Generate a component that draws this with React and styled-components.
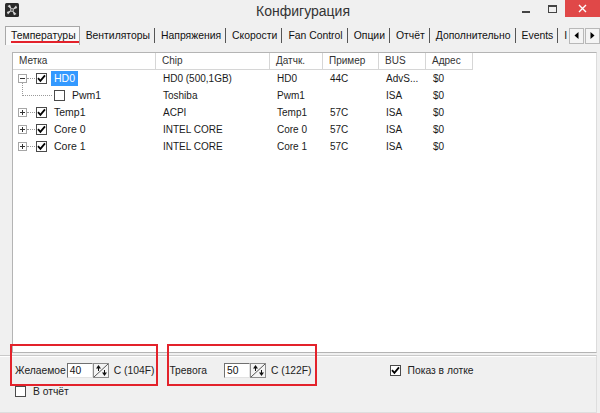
import { Fragment } from 'react';
import styled, { createGlobalStyle } from 'styled-components';

const RED = '#e3222b';

const GlobalStyle = createGlobalStyle`
  html, body {
    margin: 0;
    padding: 0;
    background: #f0f0f0;
  }
  body {
    font-family: "Liberation Sans", Arial, sans-serif;
    font-size: 11px;
    color: #111;
  }
`;

const Window = styled.div`
  width: 600px;
  height: 413px;
  display: flex;
  flex-direction: column;
  background: #f0f0f0;
  overflow: hidden;
`;

const TitleBar = styled.div`
  height: 26px;
  display: grid;
  grid-template-columns: 1fr auto 1fr;
  align-items: start;
`;

const AppIcon = styled.svg`
  width: 14px;
  height: 14px;
  margin: 3px 0 0 5px;
`;

const Title = styled.div`
  font-size: 14px;
  line-height: 22px;
  color: #333;
  padding-left: 6px;
`;

const Controls = styled.div`
  display: flex;
  justify-content: flex-end;
`;

const CtrlButton = styled.div`
  width: ${p => (p.$close ? 35 : 26)}px;
  height: 17px;
  display: flex;
  align-items: center;
  justify-content: center;
  background: ${p => (p.$close ? '#e04848' : 'transparent')};
`;

const MinGlyph = styled.span`
  width: 8px;
  height: 2px;
  margin-top: 6px;
  background: #444;
`;

const MaxGlyph = styled.span`
  width: 7px;
  height: 5px;
  border: 1px solid #444;
  border-top-width: 2px;
`;

const TabStrip = styled.div`
  height: 19px;
  display: flex;
  align-items: stretch;
  padding-left: 5px;
`;

const TabList = styled.div`
  flex: 1;
  display: flex;
  align-items: stretch;
  overflow: hidden;
  white-space: nowrap;
  font-size: 10.4px;
`;

const Tab = styled.div`
  position: relative;
  display: flex;
  align-items: center;
  padding: 0 ${p => (p.$active ? 3 : 4)}px 1px ${p => (p.$active ? 5 : 6)}px;
  color: #111;
  ${p =>
    p.$active
      ? `
    background: #f9f9f9;
    border: 1px solid #a8a8a8;
    border-bottom: none;
    &::after {
      content: '';
      position: absolute;
      left: 5px;
      right: 0;
      bottom: 2px;
      height: 2px;
      background: ${RED};
    }
  `
      : ''}
`;

const TabSep = styled.span`
  align-self: center;
  width: 1px;
  height: 15px;
  background: #555;
  flex-shrink: 0;
`;

const ScrollButtons = styled.div`
  display: flex;
  align-items: center;
  gap: 1px;
  padding-left: 2px;
`;

const ScrollButton = styled.div`
  width: 13px;
  height: 14px;
  border: 1px solid #b8b8b8;
  background: #f4f4f4;
  display: flex;
  align-items: center;
  justify-content: center;
`;

const COLS = '143px 114px 53px 56px 47px 47px 1fr';

const ListView = styled.div`
  margin: 7px 3px 0 12px;
  height: 299px;
  border: 1px solid #b4b4b4;
  border-right-color: #dcdcdc;
  background: #fff;
  font-size: 10px;
`;

const HeaderRow = styled.div`
  display: grid;
  grid-template-columns: ${COLS};
  height: 17px;
`;

const HeaderCell = styled.div`
  padding-left: 6px;
  line-height: 16px;
  color: #333;
  ${p => (p.$blank ? '' : 'border-right: 1px solid #d6d6d6; border-bottom: 1px solid #d6d6d6;')}
`;

const Row = styled.div`
  display: grid;
  grid-template-columns: ${COLS};
  height: 17px;
  align-items: center;
`;

const Cell = styled.div`
  padding-left: 7px;
  white-space: nowrap;
  color: #1a1a1a;
`;

const TreeCell = styled.div`
  display: flex;
  align-items: center;
  height: 17px;
  padding-left: ${p => (p.$level ? 9 : 5)}px;
`;

const Elbow = styled.span`
  align-self: flex-start;
  width: 29px;
  height: 12px;
  margin-top: -4px;
  margin-right: 2px;
  border-left: 1px dotted #9a9a9a;
  border-bottom: 1px dotted #9a9a9a;
  box-sizing: content-box;
`;

const Dash = styled.span`
  width: 8px;
  margin-right: 1px;
  border-top: 1px dotted #9a9a9a;
`;

const Expander = styled.svg`
  width: 9px;
  height: 9px;
  flex-shrink: 0;
`;

const Box = styled.span`
  width: 11px;
  height: 11px;
  box-sizing: border-box;
  border: 1px solid #4a4a4a;
  background: #fff;
  display: inline-flex;
  align-items: center;
  justify-content: center;
  flex-shrink: 0;
`;

const Label = styled.span`
  margin-left: 4px;
  padding: 0 3px;
  line-height: 15px;
  font-size: 10.5px;
  background: ${p => (p.$selected ? '#3399ff' : 'transparent')};
  color: ${p => (p.$selected ? '#fff' : '#1a1a1a')};
`;

const Panel = styled.div`
  margin: 2px 3px 0 0;
  border-top: 1px solid #c9c9c9;
  border-bottom: 1px solid #dedede;
  border-right: 1px solid #dedede;
  box-shadow: inset 0 1px 0 #fff;
  height: 50px;
  padding: 6px 0 0 15px;
  display: flex;
  flex-direction: column;
  gap: 8px;
  font-size: 10.3px;
`;

const PanelRow = styled.div`
  display: flex;
  align-items: center;
  height: 16px;
`;

const Field = styled.div`
  position: relative;
  display: flex;
  align-items: center;
  margin-left: ${p => p.$offset || 0}px;
`;

const Highlight = styled.span`
  position: absolute;
  top: -19px;
  bottom: -8px;
  left: ${p => p.$left}px;
  right: ${p => p.$right}px;
  border: 2px solid ${RED};
  pointer-events: none;
`;

const FieldLabel = styled.span`
  margin-right: ${p => p.$gap}px;
  color: #222;
`;

const NumInput = styled.div`
  width: 22px;
  height: 13px;
  padding-left: 2px;
  line-height: 13px;
  background: #fff;
  border: 1px solid;
  border-color: #707070 #e2e2e2 #e2e2e2 #707070;
`;

const Spinner = styled.svg`
  width: 16px;
  height: 15px;
  flex-shrink: 0;
`;

const Unit = styled.span`
  margin-left: 5px;
  color: #222;
`;

const CheckLine = styled.label`
  display: flex;
  align-items: center;
  gap: 7px;
  margin-left: ${p => p.$offset || 0}px;
  color: #222;
`;

const Check = ({ checked }) => (
  <Box>
    {checked && (
      <svg width="9" height="9" viewBox="0 0 9 9">
        <path d="M1 4.2 L3.4 6.8 L8 1.4" fill="none" stroke="#000" strokeWidth="1.8" />
      </svg>
    )}
  </Box>
);

const Toggle = ({ open }) => (
  <Expander viewBox="0 0 9 9">
    <rect x="0.5" y="0.5" width="8" height="8" fill="#fff" stroke="#a6a6a6" />
    <line x1="2" y1="4.5" x2="7" y2="4.5" stroke="#333" />
    {!open && <line x1="4.5" y1="2" x2="4.5" y2="7" stroke="#333" />}
  </Expander>
);

const SpinBox = () => (
  <Spinner viewBox="0 0 16 15">
    <rect x="0.5" y="0.5" width="15" height="14" fill="#f4f4f4" stroke="#8c8c8c" />
    <line x1="1" y1="14" x2="15" y2="1" stroke="#555" />
    <path d="M3 5.5 L8 5.5 L5.5 2 Z" fill="#111" />
    <line x1="5.5" y1="5" x2="5.5" y2="8" stroke="#111" />
    <path d="M9 9.5 L14 9.5 L11.5 13 Z" fill="#111" />
    <line x1="11.5" y1="7" x2="11.5" y2="10" stroke="#111" />
  </Spinner>
);

const Arrow = ({ dir }) => (
  <svg width="5" height="7" viewBox="0 0 5 7">
    <path d={dir === 'left' ? 'M4.5 0 L0.5 3.5 L4.5 7 Z' : 'M0.5 0 L4.5 3.5 L0.5 7 Z'} fill="#000" />
  </svg>
);

const tabs = [
  'Температуры',
  'Вентиляторы',
  'Напряжения',
  'Скорости',
  'Fan Control',
  'Опции',
  'Отчёт',
  'Дополнительно',
  'Events',
  'Information',
];

const columns = ['Метка', 'Chip', 'Датчк.', 'Пример', 'BUS', 'Адрес'];

const sensors = [
  { label: 'HD0', chip: 'HD0 (500,1GB)', sensor: 'HD0', sample: '44C', bus: 'AdvS...', addr: '$0', level: 0, open: true, checked: true, selected: true },
  { label: 'Pwm1', chip: 'Toshiba', sensor: 'Pwm1', sample: '', bus: 'ISA', addr: '$0', level: 1, checked: false },
  { label: 'Temp1', chip: 'ACPI', sensor: 'Temp1', sample: '57C', bus: 'ISA', addr: '$0', level: 0, checked: true },
  { label: 'Core 0', chip: 'INTEL CORE', sensor: 'Core 0', sample: '57C', bus: 'ISA', addr: '$0', level: 0, checked: true },
  { label: 'Core 1', chip: 'INTEL CORE', sensor: 'Core 1', sample: '57C', bus: 'ISA', addr: '$0', level: 0, checked: true },
];

const App = () => (
  <>
    <GlobalStyle />
    <Window>
      <TitleBar>
        <AppIcon viewBox="0 0 14 14">
          <rect width="14" height="14" rx="1.5" fill="#2a2a2a" />
          <g fill="#d8d8d8">
            <path d="M7 7 L2.5 3 L5 1.8 Z" />
            <path d="M7 7 L11 2.5 L12.2 5 Z" />
            <path d="M7 7 L11.5 11 L9 12.2 Z" />
            <path d="M7 7 L3 11.5 L1.8 9 Z" />
          </g>
          <circle cx="7" cy="7" r="1.4" fill="#2a2a2a" stroke="#d8d8d8" strokeWidth="0.9" />
        </AppIcon>
        <Title>Конфигурация</Title>
        <Controls>
          <CtrlButton>
            <MinGlyph />
          </CtrlButton>
          <CtrlButton>
            <MaxGlyph />
          </CtrlButton>
          <CtrlButton $close>
            <svg width="9" height="9" viewBox="0 0 9 9">
              <path d="M1 1 L8 8 M8 1 L1 8" stroke="#fff" strokeWidth="1.4" />
            </svg>
          </CtrlButton>
        </Controls>
      </TitleBar>

      <TabStrip>
        <TabList>
          {tabs.map((t, i) => (
            <Fragment key={t}>
              {i > 1 && <TabSep />}
              <Tab $active={i === 0}>{t}</Tab>
            </Fragment>
          ))}
        </TabList>
        <ScrollButtons>
          <ScrollButton>
            <Arrow dir="left" />
          </ScrollButton>
          <ScrollButton>
            <Arrow dir="right" />
          </ScrollButton>
        </ScrollButtons>
      </TabStrip>

      <ListView>
        <HeaderRow>
          {columns.map(c => (
            <HeaderCell key={c}>{c}</HeaderCell>
          ))}
          <HeaderCell $blank />
        </HeaderRow>
        {sensors.map(s => (
          <Row key={s.label}>
            <TreeCell $level={s.level}>
              {s.level ? (
                <Elbow />
              ) : (
                <>
                  <Toggle open={s.open} />
                  <Dash />
                </>
              )}
              <Check checked={s.checked} />
              <Label $selected={s.selected}>{s.label}</Label>
            </TreeCell>
            <Cell>{s.chip}</Cell>
            <Cell>{s.sensor}</Cell>
            <Cell>{s.sample}</Cell>
            <Cell>{s.bus}</Cell>
            <Cell>{s.addr}</Cell>
            <Cell />
          </Row>
        ))}
      </ListView>

      <Panel>
        <PanelRow>
          <Field>
            <Highlight $left={-5} $right={-4} />
            <FieldLabel $gap={1}>Желаемое</FieldLabel>
            <NumInput>40</NumInput>
            <SpinBox />
            <Unit>C (104F)</Unit>
          </Field>
          <Field $offset={15}>
            <Highlight $left={-2} $right={-5} />
            <FieldLabel $gap={17}>Тревога</FieldLabel>
            <NumInput>50</NumInput>
            <SpinBox />
            <Unit>C (122F)</Unit>
          </Field>
          <CheckLine $offset={78}>
            <Check checked />
            Показ в лотке
          </CheckLine>
        </PanelRow>
        <CheckLine>
          <Check />
          В отчёт
        </CheckLine>
      </Panel>
    </Window>
  </>
);

export default App;
